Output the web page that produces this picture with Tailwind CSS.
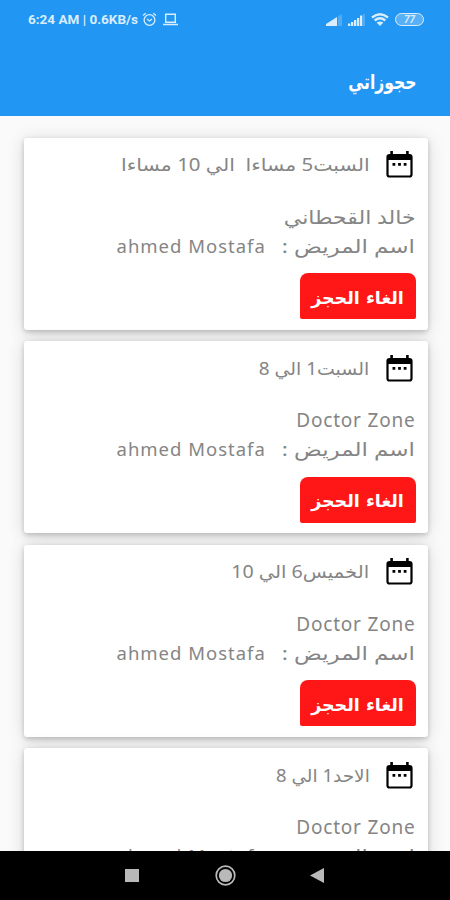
<!DOCTYPE html>
<html lang="ar" dir="rtl">
  <head>
    <meta charset="UTF-8" />
    <meta name="viewport" content="width=device-width, initial-scale=1.0" />
    <title>حجوزاتي</title>

    <script src="https://cdn.jsdelivr.net/npm/@tailwindcss/browser@4"></script>
  </head>
  <body>
    <div class="flex flex-col w-[450px] h-[900px] overflow-hidden bg-[#fafafa] font-['Noto_Sans','DejaVu_Sans',sans-serif]">
      <header class="h-[116px] shrink-0 bg-[#2196f3] text-white">
        <!-- Status bar -->
        <div dir="ltr" class="flex items-center justify-between h-[39px] pl-[28px] pr-[26px] text-[#d9edfd]">
          <div class="flex items-center">
            <span class="w-[111px] whitespace-nowrap font-[Roboto] text-[13.5px] font-bold">6:24 AM | 0.6KB/s</span>
            <svg class="ml-[3px] w-[15px] h-[15px]" viewBox="0 0 15 15" fill="none" stroke="currentColor" stroke-width="1.3">
              <circle cx="7.5" cy="8" r="5.4" />
              <path d="M1 3.5 3.8 1.2M14 3.5l-2.8-2.3M5 7l2.5 2L10 7" />
            </svg>
            <svg class="ml-[6px] w-[15px] h-[13px]" viewBox="0 0 15 13" fill="none" stroke="currentColor" stroke-width="1.4">
              <path d="M2.7 1.2h9.6v8H2.7zM0 11.5h15" />
            </svg>
          </div>
          <div class="flex items-center">
            <svg class="w-[16px] h-[12px]" viewBox="0 0 16 12" fill="currentColor">
              <path d="M0 12v-2l11-7v9z" />
              <path opacity=".25" d="M12 12V2l4-2v12z" />
            </svg>
            <svg class="ml-[6px] w-[17px] h-[12px]" viewBox="0 0 17 12" fill="currentColor">
              <path d="M0 9.500h2.300V12H0zM3 8h2.300v4H3zM6 6h2.300v6H6zM9 4h2.300v8H9zM12 1.500h2.300V12H12z" />
              <path opacity=".25" d="M15 0h2v12h-2z" />
            </svg>
            <svg class="ml-[6px] w-[18px] h-[13px]" viewBox="0 0 18 13" fill="none" stroke="currentColor" stroke-width="2.400">
              <path d="M1 4.500Q9-2 17 4.500M3.700 7.500q5.300-4.300 10.600 0" />
              <path d="M9 13 5.600 9.600q3.400-2.200 6.800 0z" fill="currentColor" stroke="none" />
            </svg>
            <span class="ml-[6px] flex items-center justify-center w-[29px] h-[13px] rounded-full border-[1.5px] border-current bg-white/25 font-[Roboto] text-[10px] leading-none font-bold italic">77</span>
          </div>
        </div>
        <h1 class="mt-[26px] pr-[34px] h-[34px] leading-[34px] text-[20px] font-bold font-['DejaVu_Sans',sans-serif]"><span class="inline-block origin-right scale-x-[0.78]">حجوزاتي</span></h1>
      </header>

      <!-- Bookings -->
      <main id="list" class="flex-1 min-h-0 overflow-hidden flex flex-col gap-[11.5px] pt-[21.5px] pl-[23.5px] pr-[22.5px]"></main>

      <!-- Navigation bar -->
      <nav dir="ltr" class="flex items-center h-[49px] shrink-0 bg-black pl-[125px] text-[#b9b9b9]">
        <span class="w-[14px] h-[13px] bg-current"></span>
        <svg class="ml-[76px] w-[21px] h-[21px]" viewBox="0 0 21 21" fill="none" stroke="currentColor">
          <circle cx="10.500" cy="10.500" r="9.300" stroke-width="1.700" />
          <circle cx="10.500" cy="10.500" r="6.600" fill="currentColor" stroke="none" />
        </svg>
        <svg class="ml-[74px] w-[14px] h-[15px]" viewBox="0 0 14 15" fill="currentColor">
          <path d="M14 0v15L0 7.500z" />
        </svg>
      </nav>
    </div>

    <template id="card">
      <article class="h-[192px] shrink-0 rounded-[3px] bg-white pr-[12px] text-[#858585] shadow-[0_2px_5px_rgba(0,0,0,0.2),0_2px_18px_rgba(0,0,0,0.14)]">
        <div class="flex items-center h-[54px]">
          <svg class="mr-[3px] w-[27px] h-[27px] text-black" viewBox="0 0 27 27">
            <rect x="1.500" y="4" width="24" height="21.500" rx="2" fill="none" stroke="currentColor" stroke-width="2.200" />
            <path d="M1 4.500h25V9H1zM4.300 0h2.600v5H4.300zM20.100 0h2.600v5h-2.600zM6.500 12h2.800v2.800H6.500zM12.100 12h2.800v2.800h-2.800zM17.700 12h2.800v2.800h-2.800z" fill="currentColor" />
          </svg>
          <span class="when mr-[16px] inline-block origin-right whitespace-pre text-[17.5px]"></span>
        </div>
        <div class="mt-[11px] h-[29px] leading-[29px] text-[19px]"><span class="doctor inline-block origin-right whitespace-pre"></span></div>
        <div class="flex h-[29px] leading-[28px] text-[18.5px]">
          <span class="inline-block origin-right scale-x-[1.245] whitespace-pre">اسم المريض :</span>
          <span dir="ltr" class="mr-auto ml-[93px] whitespace-pre tracking-[1px]">ahmed Mostafa</span>
        </div>
        <button class="mt-[12.5px] flex items-center justify-center w-[116px] h-[46px] pt-[4px] rounded-t-[8px] rounded-b-[2px] bg-[#ff1717] text-[17.5px] font-bold text-white font-['DejaVu_Sans',sans-serif]">
          <span class="whitespace-nowrap">الغاء الحجز</span>
        </button>
      </article>
    </template>

    <script>
      const bookings = [
        { when: "السبت5 مساءا  الي 10 مساءا", whenClass: "scale-x-[1.169]", doctor: "خالد القحطاني", doctorClass: "scale-x-[1.16]" },
        { when: "السبت1 الي 8", whenClass: "scale-x-[1.08]", doctor: "Doctor Zone", doctorClass: "tracking-[0.8px]" },
        { when: "الخميس6 الي 10", whenClass: "scale-x-[1.12]", doctor: "Doctor Zone", doctorClass: "tracking-[0.8px]" },
        { when: "الاحد1 الي 8", whenClass: "scale-x-[1.056]", doctor: "Doctor Zone", doctorClass: "tracking-[0.8px]" },
      ];

      const list = document.getElementById("list");
      const card = document.getElementById("card");

      bookings.forEach((b) => {
        const node = card.content.cloneNode(true);
        const when = node.querySelector(".when");
        const doctor = node.querySelector(".doctor");
        when.textContent = b.when;
        when.classList.add(b.whenClass);
        doctor.textContent = b.doctor;
        doctor.classList.add(b.doctorClass);
        list.appendChild(node);
      });
    </script>
  </body>
</html>
